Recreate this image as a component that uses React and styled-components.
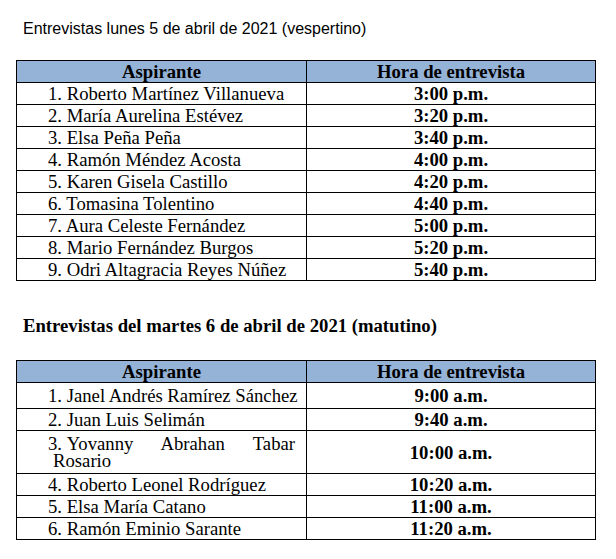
import React from "react";
import styled, { createGlobalStyle } from "styled-components";

const GlobalStyle = createGlobalStyle`
  html, body {
    margin: 0;
    padding: 0;
    background: #ffffff;
  }
  body {
    color: #000;
    font-family: "Liberation Serif", "Times New Roman", serif;
  }
`;

const Page = styled.div`
  width: 616px;
  height: 559px;
  padding: 20px 0 0 16px;
  box-sizing: border-box;
  overflow: hidden;
`;

const SansTitle = styled.div`
  font-family: "Liberation Sans", Arial, sans-serif;
  font-size: 16px;
  line-height: 18px;
  margin: 0 0 22px 7px;
`;

const SerifTitle = styled.div`
  font-family: "Liberation Serif", "Times New Roman", serif;
  font-weight: bold;
  font-size: 18.7px;
  line-height: 22px;
  margin: 34px 0 23px 7px;
`;

const Table = styled.table`
  border-collapse: collapse;
  width: 579px;
  table-layout: fixed;
  font-family: "Liberation Serif", "Times New Roman", serif;
  font-size: 18.7px;
  line-height: 17px;
`;

const Row = styled.tr`
  height: ${(p) => p.$h || 22}px;
`;

const HeadCell = styled.th`
  background: #95b3d7;
  border: 1px solid #000;
  font-weight: bold;
  text-align: center;
  vertical-align: middle;
  padding: 0;
`;

const NameCell = styled.td`
  border: 1px solid #000;
  padding: ${(p) => (p.$wrap ? "0 11px 0 36px" : "0 0 0 31px")};
  text-indent: ${(p) => (p.$wrap ? "-5px" : "0")};
  text-align: ${(p) => (p.$wrap ? "justify" : "left")};
  white-space: ${(p) => (p.$wrap ? "normal" : "nowrap")};
  vertical-align: middle;
`;

const Marker = styled.span`
  display: inline-block;
  width: 18.7px;
  text-indent: 0;
`;

const TimeCell = styled.td`
  border: 1px solid #000;
  padding: 0;
  font-weight: bold;
  text-align: center;
  vertical-align: middle;
`;

const tarde = [
  ["1. Roberto Martínez Villanueva", "3:00 p.m."],
  ["2. María Aurelina Estévez", "3:20 p.m."],
  ["3. Elsa Peña Peña", "3:40 p.m."],
  ["4. Ramón Méndez Acosta", "4:00 p.m."],
  ["5. Karen Gisela Castillo", "4:20 p.m."],
  ["6. Tomasina Tolentino", "4:40 p.m."],
  ["7. Aura Celeste Fernández", "5:00 p.m."],
  ["8. Mario Fernández Burgos", "5:20 p.m."],
  ["9. Odri Altagracia Reyes Núñez", "5:40 p.m."],
];

const manana = [
  { name: "1. Janel Andrés Ramírez Sánchez", time: "9:00 a.m.", h: 26 },
  { name: "2. Juan Luis Selimán", time: "9:40 a.m." },
  { name: "3. Yovanny Abrahan Tabar Rosario", time: "10:00 a.m.", h: 43, wrap: true },
  { name: "4. Roberto Leonel Rodríguez", time: "10:20 a.m." },
  { name: "5. Elsa María Catano", time: "11:00 a.m." },
  { name: "6. Ramón Eminio Sarante", time: "11:20 a.m." },
];

// wrapped names keep the list number apart so justify only stretches the words
const Name = ({ text, wrap }) => {
  if (!wrap) return text;
  const i = text.indexOf(" ");
  return (
    <>
      <Marker>{text.slice(0, i)}</Marker>
      {text.slice(i + 1)}
    </>
  );
};

const Horario = ({ rows }) => (
  <Table>
    <colgroup>
      <col style={{ width: 290 }} />
      <col style={{ width: 289 }} />
    </colgroup>
    <thead>
      <Row>
        <HeadCell>Aspirante</HeadCell>
        <HeadCell>Hora de entrevista</HeadCell>
      </Row>
    </thead>
    <tbody>
      {rows.map((r) => (
        <Row key={r.name} $h={r.h}>
          <NameCell $wrap={r.wrap}>
            <Name text={r.name} wrap={r.wrap} />
          </NameCell>
          <TimeCell>{r.time}</TimeCell>
        </Row>
      ))}
    </tbody>
  </Table>
);

export default function App() {
  return (
    <>
      <GlobalStyle />
      <Page>
        <SansTitle>Entrevistas lunes 5 de abril de 2021 (vespertino)</SansTitle>
        <Horario rows={tarde.map(([name, time]) => ({ name, time }))} />
        <SerifTitle>Entrevistas del martes 6 de abril de 2021 (matutino)</SerifTitle>
        <Horario rows={manana} />
      </Page>
    </>
  );
}
